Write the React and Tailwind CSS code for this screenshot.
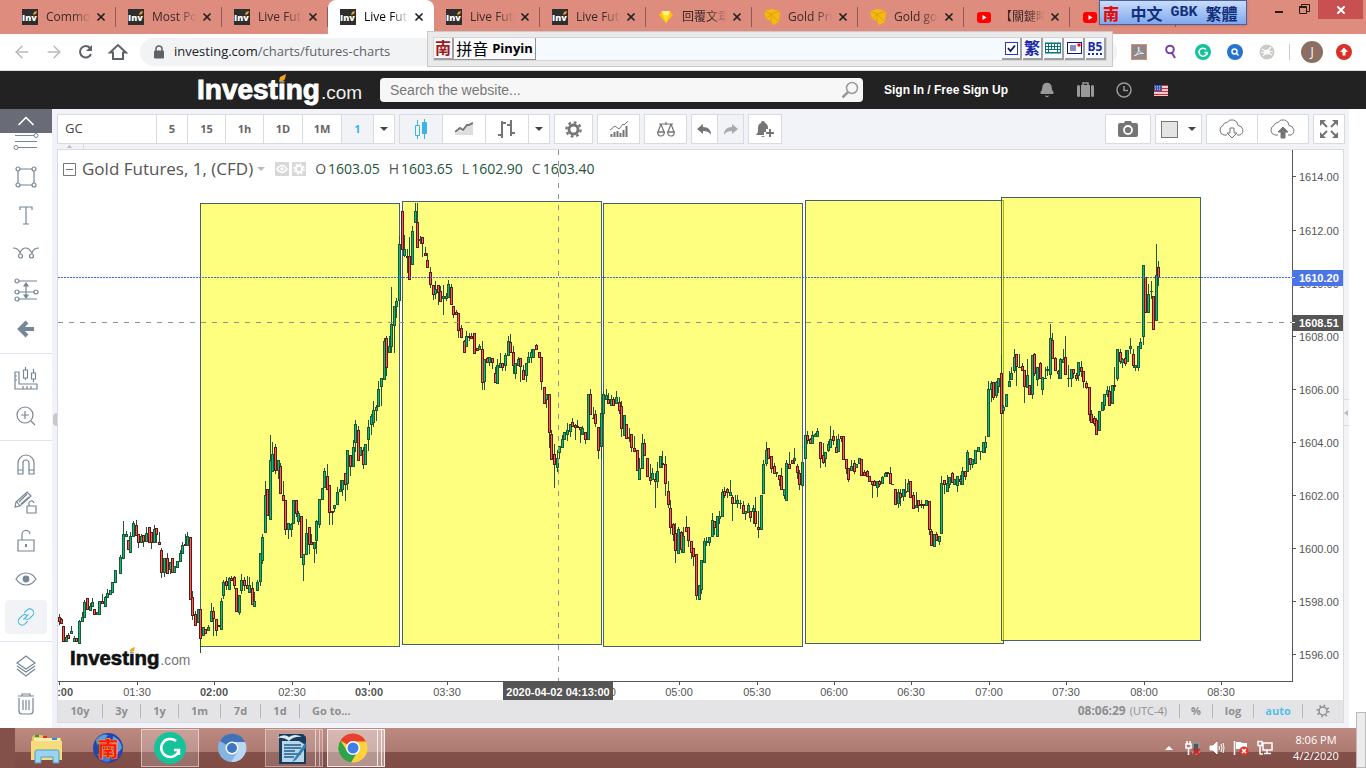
import { Fragment } from 'react';
import { ArrowLeft, ArrowRight, ChevronUp, X, Bell } from 'lucide-react';

const UI = "font-['Open_Sans','Noto_Sans_CJK_TC',sans-serif]";

// colour + x, then high, body top, body bottom, low
const CANDLES = `
r59 614 617 621 624,r61 618 619 623 623,r63 626 626 641 641,g66 635 637 641 641,r68 633 635 638 638,g71 626 631 633 633,g74 636 638 641 641,r76 638 638 641 641,
g79 620 621 643 643,g82 612 617 621 621,g84 600 602 617 617,r87 598 598 609 609,g90 603 606 610 610,g92 598 602 606 606,r94 609 609 614 614,g97 612 612 614 614,
g99 601 601 614 614,r102 594 601 603 603,g105 596 597 606 606,g107 589 593 597 597,g110 590 590 594 594,g112 582 582 592 592,g115 570 570 582 582,g120 555 557 573 573,
g123 521 534 558 558,g126 531 534 536 536,r128 540 540 549 549,g130 532 536 552 552,g133 521 523 536 536,r136 520 525 535 535,r138 534 534 542 547,g141 534 536 542 542,
r143 535 535 541 546,g146 527 533 541 541,r149 527 527 542 542,r151 532 532 542 548,g154 525 529 542 542,r156 528 528 534 542,r159 532 542 544 544,r161 548 550 572 577,
g164 558 558 572 576,r167 553 558 573 573,g170 562 562 569 573,r172 558 558 572 572,g174 566 566 572 572,g177 561 561 567 567,g180 550 553 561 561,g182 542 545 553 553,
r185 534 544 545 545,g187 532 536 545 545,r190 537 537 599 599,r192 591 597 615 619,r195 611 614 625 625,g198 609 609 622 622,r200 609 609 638 652,g203 627 627 635 635,
r205 629 629 633 633,g208 625 627 630 630,g211 603 611 621 621,r213 607 611 618 635,r216 619 619 630 635,r218 625 625 626 626,g221 598 601 629 629,g223 580 582 595 598,
r226 577 581 585 589,g229 577 578 589 589,r231 576 578 580 580,r234 576 577 585 588,r236 588 588 611 611,g239 595 595 612 614,g241 574 580 590 593,r244 577 580 585 590,
r247 576 585 588 588,g249 577 585 592 592,r252 582 588 604 604,g254 592 601 606 606,g257 580 582 590 590,g260 553 553 581 585,g262 534 537 560 563,g265 481 495 532 532,
r267 489 489 515 515,g270 435 460 519 519,g272 442 454 471 471,r275 444 447 470 473,g278 460 460 470 478,r280 463 466 493 493,r283 481 495 500 500,r285 500 500 529 534,
g288 523 523 529 538,g291 523 524 529 536,g293 500 500 523 523,r296 500 500 513 516,g298 511 513 521 524,r301 516 516 557 557,g303 554 554 564 580,g306 519 533 554 554,
r309 527 527 544 553,r311 534 542 544 544,g314 542 542 548 562,g316 520 521 540 553,g319 499 499 524 527,g322 488 488 499 499,g324 468 471 487 487,r327 464 476 489 489,
r329 485 485 512 524,r332 511 511 512 524,g334 505 505 508 511,g337 487 492 504 504,g340 480 489 491 491,g342 480 480 489 495,r345 473 473 484 500,g347 450 450 483 489,
r350 455 455 466 475,g353 440 447 466 466,g355 420 424 442 451,r358 426 430 460 460,g360 447 447 455 455,r363 447 450 464 468,g365 444 444 464 464,g368 420 427 439 450,
g371 414 416 424 434,g373 401 410 422 426,g376 405 407 410 420,g378 381 389 406 406,g381 378 378 386 405,g384 338 341 379 379,r386 336 338 367 375,g389 336 346 352 352,
g391 287 324 346 352,g394 306 306 325 352,g396 298 301 306 317,g399 236 244 300 306,r402 211 211 249 249,g404 235 249 255 256,r407 249 256 257 272,r409 237 256 279 279,
g412 226 231 264 264,g415 203 211 222 222,r417 203 222 247 247,g420 236 239 240 243,r422 237 237 243 256,r425 247 253 255 255,r427 253 260 267 267,r430 267 272 284 287,
r433 285 285 294 299,g435 281 289 293 298,r438 285 285 292 304,r440 286 291 301 301,g443 285 296 298 314,g446 293 296 298 300,g448 280 284 297 297,r451 284 287 304 304,
r453 306 306 314 317,r456 310 312 314 314,r458 313 313 330 337,r461 325 328 337 337,r464 340 341 352 352,g466 331 336 346 346,r469 333 336 337 340,r471 333 336 338 338,
r474 333 333 353 353,r477 348 348 350 350,g479 344 346 349 349,r482 341 349 382 389,g484 359 359 381 389,r487 357 358 362 362,g489 357 357 362 365,r492 358 358 362 368,
r495 367 373 382 382,g497 359 365 383 383,g500 353 363 367 367,r502 363 363 367 370,g505 353 355 365 370,g508 336 341 355 355,r510 334 342 352 352,r513 346 352 365 373,
g515 363 363 373 378,g518 357 359 365 365,r520 358 358 366 381,r523 365 370 379 379,g526 363 363 375 381,g528 352 357 362 362,g531 349 352 357 362,g533 349 349 357 357,
r536 344 345 349 349,r539 352 352 357 357,r541 357 357 381 389,r544 387 387 403 403,g546 394 394 399 407,r549 394 394 432 447,r551 430 434 459 459,r554 444 454 464 487,
g557 450 458 467 471,g559 446 446 452 458,g562 435 439 447 447,g564 432 432 439 439,g567 423 430 434 440,g570 424 424 431 436,r572 418 422 426 426,r575 424 425 427 439,
r577 420 426 427 427,r580 427 427 429 442,g582 426 428 434 434,r585 432 432 439 443,g588 394 394 439 439,r590 389 394 414 414,r593 407 418 418 418,r595 410 414 423 426,
r598 427 427 450 458,g601 413 413 446 458,g603 391 394 413 418,g606 389 395 399 399,r608 393 399 403 403,g611 395 399 405 405,r613 397 399 405 405,g616 391 397 403 403,
r619 397 402 410 413,r621 401 406 428 436,g624 415 415 435 435,r626 424 424 438 438,g629 428 437 438 441,r631 434 434 447 451,r634 436 448 451 451,r637 450 450 470 470,
g639 458 468 479 479,g642 434 443 468 468,r644 439 443 455 455,r647 458 458 476 476,r650 464 477 480 484,g652 468 473 479 479,r655 473 479 481 507,g657 462 471 481 487,
g660 456 456 467 467,r662 451 463 464 467,r665 456 464 483 495,r668 481 491 504 507,r670 500 508 527 533,r673 523 524 534 540,r675 523 533 550 562,g678 527 529 553 553,
r681 531 532 549 552,g683 527 536 552 552,r686 516 527 531 531,r688 527 527 540 546,r691 541 541 552 558,r693 548 548 556 565,r696 554 554 595 599,g699 585 585 599 599,
g701 560 560 589 593,g704 538 541 562 562,g706 537 541 542 545,g709 537 537 542 545,g712 513 520 536 536,r714 521 521 527 534,g717 516 516 536 536,g719 511 516 518 523,
g722 489 492 516 516,r724 487 491 495 497,r727 488 489 492 497,g730 480 492 495 495,r732 495 497 503 520,g735 495 503 503 503,g737 495 500 503 507,g740 500 503 503 508,
r743 501 505 513 513,g745 511 511 513 519,g748 503 505 512 512,r750 511 511 517 521,g753 505 508 511 523,r755 497 511 523 526,r758 511 527 529 537,g761 495 495 529 529,
g763 460 464 493 493,g766 442 450 463 465,r768 448 448 458 458,r771 456 456 468 472,r774 463 466 473 473,g776 472 472 473 476,r779 475 475 479 485,r781 468 476 489 489,
g784 489 489 495 498,g786 460 463 500 500,r789 452 464 468 468,r792 460 460 463 463,g794 448 458 460 463,r797 464 466 472 478,r799 470 473 484 489,g802 462 462 485 485,
g805 435 435 458 458,r807 431 435 440 443,r810 438 439 443 443,g812 431 435 443 443,g815 433 434 436 436,g817 428 431 436 436,r820 442 442 458 467,r823 443 455 462 463,
g825 452 452 458 466,g828 441 444 450 451,g830 426 439 447 447,r833 430 436 440 444,r836 436 447 452 452,g838 434 439 451 451,r841 436 436 438 441,r843 436 436 459 459,
r846 459 459 468 473,r848 468 468 479 481,g851 460 466 470 470,r854 460 463 471 473,g856 464 464 467 467,g859 458 458 463 463,r861 459 459 475 475,r864 470 472 475 475,
r867 470 471 476 476,r869 476 476 481 481,r872 481 481 484 497,r874 480 481 485 485,g877 481 481 487 496,r879 480 481 484 486,g882 476 477 483 483,g885 472 473 476 476,
r887 472 472 473 476,r890 467 473 483 483,g892 484 484 484 484,r895 489 489 504 504,g898 489 492 503 507,r900 489 493 497 505,g903 489 489 496 500,g905 479 491 492 496,
g908 479 483 491 491,r910 481 481 497 497,r913 492 495 508 508,g916 492 505 507 507,r918 500 500 505 511,r921 500 504 505 507,r923 504 504 505 508,g926 500 500 505 505,
r929 501 501 529 534,r931 529 531 545 545,g934 534 534 546 546,r936 532 534 540 540,g939 536 536 541 544,g941 476 483 533 533,r944 480 480 484 493,g947 475 483 491 491,
g949 477 477 484 487,r952 472 473 482 482,g954 479 479 484 484,g957 476 476 485 491,r960 475 479 481 484,g962 467 471 484 484,r965 471 471 476 479,g967 450 452 471 471,
r970 458 458 464 469,g972 459 459 464 467,g975 450 450 463 463,g978 447 447 451 451,g980 451 451 451 459,g983 442 442 452 452,g985 436 442 447 452,g988 381 389 436 436,
g991 381 383 389 401,r993 382 382 397 399,g996 381 382 395 397,g998 378 378 386 392,r1001 355 373 413 413,g1003 405 407 410 413,g1006 394 394 406 406,g1009 371 381 386 386,
g1011 367 373 379 379,g1014 349 357 370 372,r1016 354 354 366 385,g1019 354 367 367 367,r1022 363 366 370 370,r1024 370 370 386 402,g1027 359 375 387 387,r1029 385 385 394 394,
g1032 355 355 394 398,r1034 353 354 373 375,g1037 367 367 379 385,r1040 362 363 378 378,g1042 377 377 389 394,g1045 367 378 378 378,g1047 366 369 370 375,g1050 324 338 374 378,
r1052 333 340 358 358,r1055 357 358 370 370,r1058 370 371 373 378,g1060 358 359 378 378,g1063 349 359 362 362,r1065 336 357 374 374,g1068 365 378 378 386,g1071 369 369 378 386,
r1073 369 369 373 377,r1076 373 375 378 380,g1078 362 362 375 380,r1081 361 367 371 376,r1083 371 371 381 387,r1086 381 383 387 388,r1089 387 387 414 420,r1091 410 414 422 422,
r1094 416 418 423 425,r1096 418 420 434 434,g1099 411 411 430 430,g1102 402 402 410 410,g1104 394 394 405 409,g1107 386 390 394 396,r1109 386 391 405 405,g1112 385 385 403 403,
r1114 367 385 386 390,g1117 349 349 378 380,r1120 349 352 361 363,g1122 358 359 362 367,r1125 350 358 363 365,g1127 350 350 361 361,g1130 338 346 348 353,r1133 349 354 365 367,
g1135 365 365 367 370,g1138 346 346 367 370,g1140 338 342 348 348,g1143 265 265 336 344,r1145 277 277 312 312,g1148 284 294 312 312,g1151 281 291 291 298,r1153 296 296 329 329,
g1156 244 275 320 320,r1158 261 267 277 285`
  .split(',')
  .map((row) => {
    const s = row.trim();
    const [x, high, top, bottom, low] = s.slice(1).split(' ').map(Number);
    return { up: s[0] === 'g', x, high, top, bottom, low };
  });

const RANGES = [
  [200, 203, 200, 443],
  [402, 201, 200, 443],
  [603, 203, 200, 443],
  [805, 200, 199, 443],
  [1001, 197, 200, 443],
];

const PRICES = [
  ['1614.00', 176], ['1612.00', 230], ['1610.00', 283], ['1608.00', 336], ['1606.00', 389],
  ['1604.00', 442], ['1602.00', 495], ['1600.00', 548], ['1598.00', 601], ['1596.00', 654],
];

const TIMES = [
  ['01:00', 59, true], ['01:30', 137], ['02:00', 214, true], ['02:30', 292], ['03:00', 369, true], ['03:30', 447],
  ['04:30', 602], ['05:00', 679], ['05:30', 757], ['06:00', 834], ['06:30', 911], ['07:00', 989],
  ['07:30', 1066], ['08:00', 1144], ['08:30', 1221],
];

const TABS = [
  ['inv', 'Commodity'], ['inv', 'Most Popular'], ['inv', 'Live Futures'], ['inv', 'Live Futures', true],
  ['inv', 'Live Futures'], ['inv', 'Live Futures'], ['gem', '回覆文章'], ['box', 'Gold Price'],
  ['box', 'Gold goes'], ['yt', '【關鍵時刻'], ['yt', ''],
];

const Favicon = ({ kind }) => {
  if (kind === 'inv') {
    return (
      <svg viewBox="0 0 16 16" className="size-4 shrink-0">
        <rect width="16" height="16" fill="#2e2e2e" />
        <text x="0" y="12" fontSize="9" fontWeight="800" fill="#fff" fontFamily="Open Sans">Inv</text>
        <path d="M11 6l1-3 3-1-1 3z" fill="#f7a11b" />
      </svg>
    );
  }
  if (kind === 'gem') {
    return (
      <svg viewBox="0 0 16 16" className="size-4 shrink-0">
        <path d="M4 2h8l3 4-7 8-7-8z" fill="#fdc30b" />
        <path d="M4 2h8l-1 4H5z" fill="#fff27a" />
        <path d="M5 6h6l-3 8z" fill="#ffe12e" />
      </svg>
    );
  }
  if (kind === 'box') {
    return (
      <svg viewBox="0 0 16 16" className="size-4 shrink-0">
        <path d="M0 2l8-2 8 2-1 11-6 3-2-4-5-2z" fill="#f5b80f" />
        <path d="M0 2l7 3 9-3M7 5v7M2 10l5-5 8 8" stroke="#d99a10" strokeWidth=".8" fill="none" />
      </svg>
    );
  }
  return (
    <svg viewBox="0 0 16 16" className="size-4 shrink-0">
      <rect x="1" y="3" width="14" height="11" rx="3" fill="#f00" />
      <path d="M6.500 6v5l4-2.500z" fill="#fff" />
    </svg>
  );
};

const Tab = ({ kind, title, active }) => (
  <div
    className={`flex h-[34px] w-[106px] shrink-0 items-center pl-3 ${
      active ? 'rounded-t-lg bg-white' : 'text-[#3c2a28]'
    }`}
  >
    <Favicon kind={kind} />
    <span className="ml-2 w-[45px] overflow-hidden whitespace-nowrap text-xs [mask-image:linear-gradient(90deg,#000_60%,transparent)]">
      {title}
    </span>
    <button type="button" aria-label="Close tab" className="ml-1 text-[#222]">
      <X className="size-3" strokeWidth={3.500} />
    </button>
    {!active && <span className="ml-auto h-5 w-px bg-[#8e5c54]" />}
  </div>
);

const BrowserChrome = () => (
  <>
    <div className={`flex h-[34px] items-start overflow-hidden bg-[#de8c7d] pl-[10px] ${UI}`}>
      {TABS.map(([kind, title, active], i) => (
        <Tab key={i} kind={kind} title={title} active={active} />
      ))}
    </div>
    <div className={`flex h-[37px] items-center border-b border-[#dadce0] bg-white ${UI}`}>
      <div className="flex items-center gap-3 pl-3 text-[#5f6368]">
        <button type="button" aria-label="Back" className="text-[#b8babd]"><ArrowLeft className="size-5" strokeWidth={1.800} /></button>
        <button type="button" aria-label="Forward" className="text-[#b8babd]"><ArrowRight className="size-5" strokeWidth={1.800} /></button>
        <button type="button" aria-label="Reload">
          <svg viewBox="0 0 20 20" className="size-5" fill="none" stroke="currentColor" strokeWidth="2">
            <path d="M14 6A5.700 5.700 0 1 0 15 12" />
            <path d="M16 3v6h-6z" fill="currentColor" stroke="none" />
          </svg>
        </button>
        <button type="button" aria-label="Home">
          <svg viewBox="0 0 20 20" className="size-5" fill="none" stroke="currentColor" strokeWidth="2">
            <path d="M2 10.500L10 3l8 7.500h-3V17H5v-6.500z" />
          </svg>
        </button>
      </div>
      <div className="ml-3 flex h-7 flex-1 items-center rounded-full bg-[#f1f3f4] pl-3">
        <svg viewBox="0 0 12 14" className="size-3.5 text-[#5f6368]">
          <path d="M3 6V4a3 3 0 0 1 6 0v2" fill="none" stroke="currentColor" strokeWidth="1.500" />
          <rect x="1" y="5.500" width="10" height="8" rx="1" fill="currentColor" />
        </svg>
        <a href="#charts" className="ml-2 text-[13px] text-[#5f6368]">
          <span className="text-[#202124]">investing.com</span>/charts/futures-charts
        </a>
      </div>
      <div className="flex items-center gap-4 pl-[14px] pr-[14px]">
        <svg viewBox="0 0 16 16" className="size-4">
          <rect x=".5" y=".5" width="15" height="15" fill="#8a8a8a" stroke="#e08a78" />
          <path d="M3 12c3-1 5-5 5-8 0-2-1-1-.5 1 .8 3 2.500 4 5 4.500-3-.5-6 .5-8 2" fill="none" stroke="#eee" />
        </svg>
        <svg viewBox="0 0 16 16" className="size-4" fill="none" stroke="#7b3fa5" strokeWidth="2">
          <circle cx="7" cy="5.500" r="3.800" />
          <path d="M9 9l3 5" />
        </svg>
        <svg viewBox="0 0 16 16" className="size-4" fill="none" stroke="#fff" strokeWidth="1.500">
          <circle cx="8" cy="8" r="8" fill="#15c39a" stroke="none" />
          <path d="M11 5.500A4 4 0 1 0 12 8.500H9.500M12 8.500v2.500" />
        </svg>
        <svg viewBox="0 0 16 16" className="size-4" fill="none" stroke="#fff" strokeWidth="1.500">
          <circle cx="8" cy="8" r="8" fill="#2373cf" stroke="none" />
          <circle cx="7.500" cy="7.500" r="2.500" />
          <path d="M9.500 9.500l2 2" />
        </svg>
        <svg viewBox="0 0 16 16" className="size-4" fill="none" stroke="#fff" strokeWidth="1.200">
          <circle cx="8" cy="8" r="7.500" fill="#c9c9c6" stroke="none" />
          <path d="M3 5l10 6M4 12l8-9M2 8l5 1M10 7l4 1" />
          <circle cx="8" cy="8" r="2" />
        </svg>
      </div>
      <span className="h-4 w-px bg-[#c8cacd]" />
      <div className="flex items-center gap-[13px] pl-[11px] pr-[14px]">
        <button type="button" className="flex size-[22px] items-center justify-center rounded-full bg-[#8d6e63] text-xs text-white">J</button>
        <svg viewBox="0 0 16 16" className="size-4">
          <circle cx="8" cy="8" r="8" fill="#d93025" />
          <path d="M8 3.500l4 4.500H9.500v3.500h-3V8H4z" fill="#fff" />
        </svg>
      </div>
    </div>
  </>
);

// the input method windows float over the browser
const FloatingWindows = () => (
  <>
    <div className="absolute right-0 top-0 flex h-5 items-start text-[#2b1a18]">
      <button type="button" aria-label="Minimize" className="mt-[11px] h-[2px] w-2 bg-current" />
      <button type="button" aria-label="Restore" className="ml-4 mt-1">
        <svg viewBox="0 0 11 11" className="size-[11px]" fill="none" stroke="currentColor">
          <path d="M.5 2.500h7v7h-7zM.5 3.500h7M2.500 2V.5h8v7H8" />
        </svg>
      </button>
      <button type="button" aria-label="Close" className="ml-2 mr-[3px] flex h-[19px] w-[45px] items-center justify-center bg-[#c85050] text-white">
        <X className="size-3" strokeWidth={4} />
      </button>
    </div>
    <div className="absolute right-[253px] top-[31px] flex h-9 w-[686px] items-center border border-[#c9c9c9] bg-[#eaeaea] px-[5px]">
      <div className={`flex h-6 flex-1 items-center border border-[#d5d5d5] bg-[#f5faff] ${UI}`}>
        <span className="flex h-[22px] w-5 items-center justify-center border-r-2 border-b-2 border-[#a0a0a0] bg-[#f5f7fb] text-base font-bold leading-none text-[#a01c1c]">南</span>
        <span className="flex h-[22px] w-[82px] items-center justify-center gap-1 border-r border-b border-[#909090] bg-[#f8fafd] leading-none text-black">
          <span className="text-base leading-none">拼音</span>
          <span className="text-[13px] font-bold">Pinyin</span>
        </span>
        <div className="ml-auto flex gap-px text-[#1d2aa8]">
          <label className="flex h-[22px] w-5 items-center justify-center border-r-2 border-b-2 border-[#a0a0a0]">
            <input type="checkbox" defaultChecked aria-label="Enable input" className="peer sr-only" />
            <svg viewBox="0 0 13 13" className="size-[13px]" fill="#fff" stroke="#2a35c0">
              <rect x=".5" y=".5" width="12" height="12" />
              <path d="M3 6l2.500 3L10 3.500" fill="none" stroke="#111a55" strokeWidth="1.800" />
            </svg>
          </label>
          <span className="flex h-[22px] w-5 items-center justify-center border-r-2 border-b-2 border-[#a0a0a0] text-base font-bold leading-none">繁</span>
          <span className="flex h-[22px] w-5 items-center justify-center border-r-2 border-b-2 border-[#a0a0a0]">
            <svg viewBox="0 0 16 12" className="w-4">
              <rect width="16" height="11" y=".5" fill="#0b7278" />
              <path d="M1 3h14M1 6h14M1 9h2M13 9h2" stroke="#fff" strokeWidth="2" strokeDasharray="2 1" />
              <path d="M4 9h8" stroke="#fff" strokeWidth="2" />
            </svg>
          </span>
          <span className="flex h-[22px] w-5 items-center justify-center border-r-2 border-b-2 border-[#a0a0a0]">
            <svg viewBox="0 0 15 12" className="w-[15px]" fill="#fff" stroke="#16168c">
              <rect x=".5" y=".5" width="14" height="11" />
              <path d="M3 4h6M3 6h6M3 8h6" />
              <rect x="11" y="2" width="2" height="2" fill="red" stroke="red" />
            </svg>
          </span>
          <span className="flex h-[22px] w-5 flex-col items-center justify-center border-r-2 border-b-2 border-[#a0a0a0] text-xs font-bold leading-3">
            B5
            <span className="w-3.5 border-b-2 border-dotted border-current" />
          </span>
        </div>
      </div>
    </div>
    <div className="absolute right-[119px] top-0 flex h-[25px] w-[148px] items-center border border-[#4a5f9c] bg-linear-to-b from-[#c9dcfa] to-[#7fa8ee] font-['Noto_Sans_CJK_TC',sans-serif] shadow">
      <span className="w-[22px] text-center text-base font-black leading-none text-[#e01010]">南</span>
      <span className="flex flex-1 items-center justify-center gap-2 whitespace-nowrap text-base font-bold leading-none text-[#12307c]">
        <span>中文</span>
        <span className="font-['Liberation_Mono',monospace] text-[15px]">GBK</span>
        <span>繁體</span>
      </span>
    </div>
  </>
);

const Logo = ({ dark, className }) => (
  <svg viewBox="0 0 166 34" className={className} fontFamily="Liberation Sans, Arial, sans-serif">
    <text x="0" y="26" fontSize="28" fontWeight="700" fill={dark ? '#111' : '#fff'} stroke={dark ? '#111' : '#fff'} strokeWidth=".9">Investing</text>
    <text x="124" y="26" fontSize="19" fill={dark ? '#777' : '#f0f0f0'}>.com</text>
    <path d="M81 3h8v5.500h-8z" fill={dark ? '#fff' : '#222'} />
    <path d="M82 8l1-4 6-3-1 5-2 2z" fill="#f7a11b" />
  </svg>
);

const SiteHeader = () => (
  <header className="flex h-[38px] items-center bg-[#222] pl-[197px] font-['Liberation_Sans',Arial,sans-serif]">
    <Logo className="h-[34px] w-[166px]" />
    <div className="ml-[17px] flex h-6 w-[483px] items-center rounded-sm bg-[#f7f7f7] pr-1">
      <input
        type="text"
        aria-label="Search the website"
        placeholder="Search the website..."
        className="min-w-0 flex-1 pl-[10px] text-sm text-[#555] outline-none placeholder:text-[#777]"
      />
      <svg viewBox="0 0 18 18" className="size-[18px]" fill="none" stroke="#999" strokeWidth="1.500">
        <circle cx="11" cy="7" r="5.500" />
        <path d="M7 11l-5.500 5.500" strokeWidth="2.500" />
      </svg>
    </div>
    <a href="#login" className="ml-[21px] text-xs font-bold text-white">Sign In / Free Sign Up</a>
    <div className="ml-[31px] flex items-center gap-[22px] text-[#999]">
      <Bell className="size-4" fill="currentColor" />
      <svg viewBox="0 0 17 16" className="w-[17px]" fill="currentColor">
        <path d="M6 3V1h5v2" fill="none" stroke="currentColor" strokeWidth="1.500" />
        <rect x="4" y="3" width="9" height="12" />
        <rect y="3" width="3" height="12" rx="1.500" />
        <rect x="14" y="3" width="3" height="12" rx="1.500" />
      </svg>
      <svg viewBox="0 0 16 16" className="size-4" fill="none" stroke="currentColor" strokeWidth="1.500">
        <circle cx="8" cy="8" r="7" />
        <path d="M8 4v4.500h4" />
      </svg>
      <svg viewBox="0 0 14 11" className="w-3.5">
        <rect width="14" height="11" fill="#fff" />
        <path d="M0 .5h14M0 3.500h14M0 6.500h14M0 9.500h14" stroke="#d0303a" strokeWidth="1.300" />
        <rect width="8" height="6" fill="#3a55a5" />
        <path d="M1 1.500h6M1 3h6M1 4.500h6" stroke="#cdd6f0" strokeWidth=".7" strokeDasharray="1 1" />
      </svg>
    </div>
  </header>
);

const TOOLS = [
  [
    ['Shapes', <><path d="M5 5h16v16H5z" /><g fill="#fff"><circle cx="5" cy="5" r="2" /><circle cx="21" cy="5" r="2" /><circle cx="5" cy="21" r="2" /><circle cx="21" cy="21" r="2" /></g></>],
    ['Text', <path d="M7 8V5h12v3M13 5v17M10 22h6" />],
    ['Patterns', <><path d="M0 8c4 0 6 2 7 5 1-3 3-5 6-5s4 2 6 5c1-3 3-5 7-5" /><g fill="#fff"><circle cx="7.500" cy="16" r="2" /><circle cx="18.500" cy="16" r="2" /></g></>],
    ['Projection', <><path d="M5 3h19M5 14h19M5 21h19M13 6v12" /><path d="M11 8l2-3 2 3zM11 17l2 3 2-3z" fill="#758696" /><g fill="#fff"><circle cx="4" cy="3" r="2" /><circle cx="4" cy="14" r="2" /><circle cx="23" cy="14" r="2" /><circle cx="4" cy="21" r="2" /></g></>],
    ['Arrow', <path d="M14 6l-7 7 7 7M8 13h13" strokeWidth="4" />],
  ],
  [
    ['Measure', <><path d="M2 7h4v12h18v5H2zM2 11h2M2 15h2M10 24v-3M14 24v-3M18 24v-3" /><path d="M10.500 5h4v8h-4zM12.500 2v3M12.500 13v2M18.500 8h4v6h-4zM20.500 4v4M20.500 14v3" /></>],
    ['Zoom in', <><circle cx="12" cy="12" r="8" /><path d="M18 18l4 4M12 8v8M8 12h8" /></>],
  ],
  [
    ['Magnet', <path d="M5 22v-11a8 8 0 0 1 16 0v11h-5v-11a3 3 0 0 0-6 0v11zM5 18h5M16 18h5" />],
    ['Drawing mode', <><path d="M2 17l1-5L14 2l4 4L7 16zM4 12l3 4M6 12l8-8M8 14l8-7" /><path d="M14 16h9v7h-9zM16 16v-2a2.500 2.500 0 0 1 5-1" /></>],
    ['Lock', <><path d="M5 12h16v11H5zM9 12V7a4 4 0 0 1 8-1" /><path d="M13 16v3" strokeWidth="2" /></>],
    ['Hide', <><path d="M3 13c5-8 15-8 20 0-5 8-15 8-20 0z" /><circle cx="13" cy="13" r="2.800" fill="#758696" /></>],
    ['Link', <path d="M11 8l3-3a4.500 4.500 0 0 1 7 6l-4 4a4.500 4.500 0 0 1-5 0M15 18l-3 3a4.500 4.500 0 0 1-7-6l4-4a4.500 4.500 0 0 1 5 0M10 16l6-6" />],
  ],
  [
    ['Layers', <path d="M4 10l9-7 9 7-9 6zM4 13l9 6 9-6M4 16l9 7 9-7" />],
    ['Remove', <path d="M5 5h16M9 5V3h8v2M6 7v13q0 3 3 3h8q3 0 3-3V7M10 9v10M13 9v10M16 9v10" />],
  ],
];

const Sidebar = () => (
  <aside className="w-[52px] shrink-0 bg-white text-[#758696]">
    <div className="relative h-[49px] overflow-hidden">
      <svg viewBox="0 0 26 49" className="mx-auto w-[26px]" fill="none" stroke="currentColor">
        <path d="M2 20.500h22M2 26.500h22M2 32.500h22M2 38.500h22" />
        <circle cx="23" cy="26.500" r="2" fill="#fff" />
        <circle cx="3" cy="38.500" r="2" fill="#fff" />
      </svg>
      <button type="button" aria-label="Scroll up" className="absolute inset-x-0 top-0 flex h-6 items-center justify-center bg-[#696b77] text-white">
        <ChevronUp className="size-7" strokeWidth={1.500} />
      </button>
    </div>
    {TOOLS.map((group, g) => (
      <div key={g} className={g ? 'mt-[5px] border-t border-[#e0e6f0] pt-[5px]' : ''}>
        {group.map(([name, icon]) => (
          <button key={name} type="button" aria-label={name} className="flex h-[38px] w-full items-center justify-center">
            <span className={`flex h-[34px] w-[42px] items-center justify-center ${name === 'Link' ? 'rounded-sm bg-[#f1f3f6] text-[#3bb3e4]' : ''}`}>
              <svg viewBox="0 0 26 26" className={name === 'Link' ? 'size-[22px]' : 'size-[26px]'} fill="none" stroke="currentColor" strokeWidth="1.200">{icon}</svg>
            </span>
          </button>
        ))}
      </div>
    ))}
  </aside>
);

const Caret = () => (
  <svg viewBox="0 0 8 4" className="w-2"><path d="M0 0h8L4 4z" fill="#444" /></svg>
);

const Group = ({ children }) => (
  <div className="flex h-[30px] divide-x divide-[#d8dbe0] border border-[#d8dbe0] bg-white text-[#757575]">{children}</div>
);

const Btn = ({ w, label, on, children }) => (
  <button type="button" aria-label={label} className={`flex items-center justify-center ${w} ${on ? 'bg-[#f1f3f6] text-[#3bb3e4]' : ''}`}>
    {children}
  </button>
);

const Gear = ({ className }) => (
  <svg viewBox="0 0 18 18" className={className} fill="none" stroke="currentColor">
    <circle cx="9" cy="9" r="4.800" strokeWidth="3" />
    <circle cx="9" cy="9" r="7.500" strokeWidth="2.500" strokeDasharray="2.900 2.990" />
  </svg>
);

const Cloud = ({ up }) => (
  <svg viewBox="0 0 28 20" className="w-7" fill="none" stroke="currentColor">
    <path d="M9 16H6a5 5 0 0 1-1-9.500 4 4 0 0 1 4-3 6 6 0 0 1 11 3 5 5 0 0 1 2 9.500h-3" />
    {up ? <path d="M14 8l5 5h-3v6h-4v-6H9z" fill="currentColor" /> : <path d="M12 9h4v5h3l-5 5-5-5h3z" />}
  </svg>
);

const INTERVALS = [
  ['5', 'w-[31px]'], ['15', 'w-[38px]'], ['1h', 'w-[38px]'], ['1D', 'w-[39px]'], ['1M', 'w-[39px]'], ['1', 'w-8'],
];

const ChartToolbar = () => (
  <div className="flex gap-1 pl-[5px] pr-1 pt-[5px]">
    <Group>
      <input type="text" aria-label="Symbol" defaultValue="GC" className="w-[99px] px-[7px] text-[13px] text-[#444] outline-none" />
      {INTERVALS.map(([t, w]) => (
        <Btn key={t} w={w} label={t} on={t === '1'}>
          <span className={`text-[11px] font-bold ${t === '1' ? '' : 'text-[#666]'}`}>{t}</span>
        </Btn>
      ))}
      <Btn w="w-5" label="More intervals"><Caret /></Btn>
    </Group>
    <Group>
      <Btn w="w-[43px]" label="Candles" on>
        <svg viewBox="0 0 14 20" className="h-5 w-3.5" fill="none" stroke="currentColor">
          <path d="M1.500 6.500h4v10h-4zM3.500 1v5M3.500 17v3M10.500 0v20" />
          <path d="M8.500 3.500h4v11h-4z" fill="currentColor" />
        </svg>
      </Btn>
      <Btn w="w-[43px]" label="Area">
        <svg viewBox="0 0 18 14" className="w-[18px]" fill="none" stroke="currentColor" strokeWidth="2">
          <path d="M0 12l5-4 3 2 4-6h2l4-3v12H0z" fill="#ddd" stroke="none" />
          <path d="M0 10l5-4 3 2 4-5h2l4-2" />
        </svg>
      </Btn>
      <Btn w="w-[43px]" label="Bars">
        <svg viewBox="0 0 18 18" className="size-[18px]" fill="none" stroke="currentColor" strokeWidth="2">
          <path d="M4 1v17M4 3h4M0 15h4M13 0v16M9 5h4M13 13h4" />
        </svg>
      </Btn>
      <Btn w="w-5" label="More styles"><Caret /></Btn>
    </Group>
    <Group><Btn w="w-[37px]" label="Settings"><Gear className="size-[17px]" /></Btn></Group>
    <Group>
      <Btn w="w-[41px]" label="Indicators">
        <svg viewBox="0 0 18 16" className="w-[18px]" fill="none" stroke="currentColor">
          <path d="M1.500 16v-3M4.500 16v-5M7.500 16v-6M10.500 16v-4M13.500 16V9M16.500 16V5" strokeWidth="2" />
          <path d="M0 9l5-4 4 3 4-5 1 1 4-4" />
        </svg>
      </Btn>
    </Group>
    <Group>
      <Btn w="w-[41px]" label="Compare">
        <svg viewBox="0 0 18 15" className="w-[18px]" fill="none" stroke="currentColor" strokeWidth="1.200">
          <path d="M2 2h14M9 0v3M4 2L1 10h6L4 2M14 2l-3 8h6l-3-8" />
          <path d="M.5 10h7q-.5 4-3.500 4T.5 10zM10.500 10h7q-.5 4-3.500 4t-3.500-4z" />
        </svg>
      </Btn>
    </Group>
    <Group>
      <Btn w="w-[26px]" label="Undo">
        <svg viewBox="0 0 15 11" className="w-[15px]" fill="currentColor"><path d="M6 0v3q8 0 8 8-2-4-8-4v3L0 5z" /></svg>
      </Btn>
      <Btn w="w-[25px]" label="Redo" on>
        <svg viewBox="0 0 15 11" className="w-[15px]" fill="#aaa"><path d="M9 0v3Q1 3 1 11q2-4 8-4v3l6-5z" /></svg>
      </Btn>
    </Group>
    <Group>
      <Btn w="w-8" label="Add alert">
        <svg viewBox="0 0 19 17" className="w-[19px]" fill="currentColor">
          <path d="M7 0q2 0 2 2 3 1 3 5v1h-2v3H8v3H0l2-3V7q0-4 3-5 0-2 2-2zM5 15h4q-2 2-4 0z" />
          <path d="M14 8v8M10 12h8" stroke="currentColor" strokeWidth="2" />
        </svg>
      </Btn>
    </Group>
    <div className="ml-auto flex gap-1">
      <Group>
        <Btn w="w-11" label="Snapshot">
          <svg viewBox="0 0 20 16" className="w-5" fill="currentColor">
            <path d="M6 2l1-2h6l1 2h4q2 0 2 2v10q0 2-2 2H2q-2 0-2-2V4q0-2 2-2z" />
            <circle cx="10" cy="9" r="4" fill="none" stroke="#fff" strokeWidth="1.800" />
          </svg>
        </Btn>
      </Group>
      <Group>
        <Btn w="w-[45px]" label="Layout">
          <span className="mr-[10px] size-[17px] border border-[#777] bg-[#e4e4e4]" />
          <Caret />
        </Btn>
      </Group>
      <Group>
        <Btn w="w-[51px]" label="Load"><Cloud /></Btn>
        <Btn w="w-[50px]" label="Save"><Cloud up /></Btn>
      </Group>
      <Group>
        <Btn w="w-[30px]" label="Fullscreen">
          <svg viewBox="0 0 18 18" className="size-[18px]" fill="currentColor" stroke="currentColor">
            <path d="M0 0h6L0 6zM18 0h-6l6 6zM0 18h6l-6-6zM18 18h-6l6-6z" stroke="none" />
            <path d="M1 1l6 6M17 1l-6 6M1 17l6-6M17 17l-6-6" strokeWidth="2" />
          </svg>
        </Btn>
      </Group>
    </div>
  </div>
);

const Legend = () => (
  <div className="absolute left-[5px] top-[7px] flex items-center text-[#555]">
    <svg viewBox="0 0 13 13" className="size-[13px]" fill="none" stroke="#777"><path d="M.5.5h12v12H.5zM3 6.500h7" /></svg>
    <span className="ml-[6px] text-[17px] leading-6">Gold Futures, 1, (CFD)</span>
    <svg viewBox="0 0 8 4" className="ml-1 w-2"><path d="M0 0h8L4 4z" fill="#bbb" /></svg>
    <span className="ml-[10px] flex size-[14px] items-center justify-center bg-[#d8d8d8]">
      <svg viewBox="0 0 12 12" className="w-3" fill="none" stroke="#fff" strokeWidth="1.500"><path d="M1 6q5-7 10 0-5 7-10 0z" /><circle cx="6" cy="6" r="1" /></svg>
    </span>
    <span className="ml-[3px] flex size-[14px] items-center justify-center bg-[#d8d8d8] text-white"><Gear className="size-3" /></span>
    {[['O', '1603.05'], ['H', '1603.65'], ['L', '1602.90'], ['C', '1603.40']].map(([k, v]) => (
      <span key={k} className="ml-[9px] text-sm">
        {k}<span className="ml-0.5 text-[#225437]">{v}</span>
      </span>
    ))}
  </div>
);

const Chart = () => (
  <svg viewBox="58 150 1285 550" className="block w-full" shapeRendering="crispEdges" fontSize="11" fontFamily="Liberation Sans, Arial, sans-serif" fill="#555">
    {RANGES.map(([x, y, w, h]) => (
      <rect key={x} x={x + 0.5} y={y + 0.5} width={w - 1} height={h} fill="#ff0" fillOpacity=".5" stroke="#46606e" />
    ))}
    {CANDLES.map(({ up, x, high, top, bottom, low }) => (
      <Fragment key={x}>
        <rect x={x} y={high} width="1" height={low - high + 1} fill="#225437" />
        <rect x={x - 1} y={top} width="3" height={bottom - top + 1} fill={up ? '#225437' : '#5b1a13'} />
        {bottom - top > 1 && <rect x={x} y={top + 1} width="1" height={bottom - top - 1} fill={up ? '#00c176' : '#ff5b52'} />}
      </Fragment>
    ))}
    <path d="M58 277.500h1234" stroke="#3f66d0" strokeDasharray="2 1" />
    <path d="M58 322.500h1234" stroke="#909090" strokeDasharray="5 6" />
    <path d="M558.500 150v531" stroke="#909090" strokeDasharray="5 6" />

    <path d="M1292.500 150v531.500H58" fill="none" stroke="#555" />
    {PRICES.map(([label, y]) => (
      <g key={label}>
        <path d={`M1293 ${y + 0.5}h3`} stroke="#555" />
        <text x="1299" y={y + 5}>{label}</text>
      </g>
    ))}
    {TIMES.map(([label, x, bold]) => (
      <g key={label}>
        <path d={`M${x + 0.5} 682v3`} stroke="#555" />
        <text x={x} y="696" textAnchor="middle" fontWeight={bold ? 700 : 400}>{label}</text>
      </g>
    ))}
    <g fill="#fff" fontWeight="700">
      <rect x="1292" y="270" width="51" height="16" fill="#4a74e8" />
      <text x="1299" y="282">1610.20</text>
      <rect x="1292" y="315" width="51" height="16" fill="#555" />
      <text x="1299" y="327">1608.51</text>
      <path d="M1292 277.500h3M1292 322.500h3" stroke="#fff" />
      <rect x="503" y="682" width="110" height="18" fill="#555" />
      <text x="558" y="696" textAnchor="middle">2020-04-02 04:13:00</text>
    </g>
  </svg>
);

const Divider = () => <span className="h-3.5 w-px bg-[#b8b8bb]" />;

const RANGE_LINKS = [['10y', 'w-[44px]'], ['3y', 'w-[37px]'], ['1y', 'w-[37px]'], ['1m', 'w-[41px]'], ['7d', 'w-[39px]'], ['1d', 'w-[38px]']];

const BottomBar = () => (
  <div className="flex h-[22px] items-center bg-[#e4e4e7] text-[11px] font-bold text-[#8e8e8e]">
    {RANGE_LINKS.map(([t, w]) => (
      <Fragment key={t}>
        <button type="button" className={w}>{t}</button>
        <Divider />
      </Fragment>
    ))}
    <button type="button" className="ml-3">Go to...</button>
    <span className="ml-auto text-xs">08:06:29</span>
    <span className="ml-1 mr-3 font-normal">(UTC-4)</span>
    <Divider />
    <button type="button" className="w-8">%</button>
    <Divider />
    <button type="button" className="w-10">log</button>
    <Divider />
    <button type="button" className="w-12 text-[#53bfe8]">auto</button>
    <Divider />
    <button type="button" aria-label="Chart properties" className="flex w-10 justify-center">
      <svg viewBox="0 0 14 14" className="size-3.5" fill="none" stroke="currentColor">
        <circle cx="7" cy="7" r="4" strokeWidth="1.500" />
        <circle cx="7" cy="7" r="5.500" strokeWidth="2" strokeDasharray="1.500 2.820" />
      </svg>
    </button>
  </div>
);

const Taskbar = () => (
  <footer className={`flex h-10 items-center bg-[linear-gradient(#bd8a82,#ad7a72_60%,#84504a_60%,#804c46)] text-white ${UI}`}>
    <div className="h-full w-[15px] bg-[#84504a]" />
    <button type="button" aria-label="File Explorer" className="ml-4">
      <svg viewBox="0 0 32 32" className="size-8">
        <path d="M1 5l2-2h8l2 3h17v22H1z" fill="#e7c85c" />
        <path d="M3 6h26v20H3z" fill="#f9eeb0" />
        <path d="M0 9h31v19H0z" fill="#f4dc7c" />
        <path d="M4 3h4v2H4z" fill="#1da53a" /><path d="M12 4h4v2h-4z" fill="#d8322a" /><path d="M21 6h5v2h-5z" fill="#2a8bd8" />
        <path d="M4 31V20q0-2 2-2h20q2 0 2 2v11h-6v-6H10v6z" fill="#9bd4f2" stroke="#4c9dcb" />
      </svg>
    </button>
    <button type="button" aria-label="NJStar" className="ml-7">
      <svg viewBox="0 0 34 32" className="h-8 w-[34px]">
        <circle cx="17" cy="16" r="15" fill="#2346a8" />
        <path d="M5 8q6-7 12-5l-4 6-7 4zM22 4q8 4 9 12l-5 6-5-8z" fill="#5c9bdc" />
        <path d="M6 22q8-2 14 6l-3 2Q9 30 6 22z" fill="#4679cc" />
        <text x="17" y="24" textAnchor="middle" fontSize="21" fontWeight="900" fill="#f11" stroke="#ff9a1c" strokeWidth=".6" fontFamily="Noto Sans CJK TC">南</text>
      </svg>
    </button>
    <button type="button" aria-label="Grammarly" className="ml-4 flex h-[38px] w-[58px] items-center justify-center border border-white/50 bg-white/20">
      <svg viewBox="0 0 32 32" className="size-8" fill="none" stroke="#fff" strokeWidth="2.500">
        <circle cx="16" cy="16" r="16" fill="#15c39a" stroke="none" />
        <path d="M22 9a9 9 0 1 0 3 9h-5M25 18v5" />
      </svg>
    </button>
    <button type="button" aria-label="Chromium" className="ml-[18px]">
      <svg viewBox="0 0 30 30" className="size-[30px]">
        <circle cx="15" cy="15" r="14" fill="#86b4e2" />
        <path d="M15 15L3 8a14 14 0 0 1 25 1H15z" fill="#3f73b5" />
        <path d="M15 15l6 3-7 11a14 14 0 0 0 14-20H18z" fill="#b9d6f2" />
        <circle cx="15" cy="15" r="6.500" fill="#fff" /><circle cx="15" cy="15" r="5" fill="#3c77c2" />
      </svg>
    </button>
    <button type="button" aria-label="LibreOffice Writer" className="ml-[18px] flex h-[38px] w-[58px] border border-white/40 bg-white/15">
      <span className="flex h-full w-[50px] items-center justify-center border-r border-white/60">
        <svg viewBox="0 0 32 34" className="h-[34px]">
          <path d="M4 3h24l3 3v27H4z" fill="#173c5c" />
          <path d="M7 10h17l5 3v18H7z" fill="#b8d6e8" />
          <path d="M9 14h17M9 17h17M9 20h11M9 23h17M9 26h10" stroke="#1f5f8f" strokeWidth="1.500" />
          <path d="M2 7q7-5 12-1 6-4 13 0-8-1-13 4Q9 6 2 7z" fill="#dcebf5" />
          <path d="M30 12L19 28l-2 3 4-2 11-14z" fill="#2f7fb5" />
        </svg>
      </span>
      <span className="h-full w-1 border-r border-white/50" />
    </button>
    <button type="button" aria-label="Chrome" className="ml-1 flex h-[38px] w-[58px] border border-white/80 bg-white/40">
      <span className="flex h-full w-[50px] items-center justify-center border-r border-white/80">
        <svg viewBox="0 0 30 30" className="size-[30px]">
          <circle cx="15" cy="15" r="14.500" fill="#fdd23a" />
          <path d="M15 15L2.500 7.500a14.500 14.500 0 0 1 25.500 1H15z" fill="#e8402f" />
          <path d="M15 15l-2 14.500A14.500 14.500 0 0 1 2.500 7.500L9 18z" fill="#2fa24c" />
          <path d="M13 29.500L20 18 9 18z" fill="#2fa24c" />
          <circle cx="15" cy="15" r="7" fill="#fff" /><circle cx="15" cy="15" r="5.500" fill="#3f7ee8" />
        </svg>
      </span>
      <span className="h-full w-1 border-r border-white/80" />
    </button>
    <div className="ml-auto flex items-center gap-2">
      <svg viewBox="0 0 8 4" className="mr-1 w-2"><path d="M0 4h8L4 0z" fill="#fff" /></svg>
      <svg viewBox="0 0 16 16" className="size-4" fill="none" stroke="#fff" strokeWidth="1.500">
        <path d="M1 4h5v4H1zM2 1v3M5 1v3M3.500 8v7" />
        <path d="M8 14V3h6v11z" fill="#555" stroke="#999" />
        <path d="M8 9l7 6M15 9l-7 6" stroke="#d22" strokeWidth="2" />
      </svg>
      <svg viewBox="0 0 16 16" className="size-4" fill="#fff" stroke="#fff">
        <path d="M1 6h3l4-4v12l-4-4H1z" /><path d="M10 6q1 2 0 4M12 4q2 4 0 8M14 3q2 5 0 10" fill="none" />
      </svg>
      <svg viewBox="0 0 16 16" className="size-4">
        <path d="M1.500 1v14" stroke="#fff" strokeWidth="1.500" /><path d="M3 2h5l1 1h5v7H9L8 9H3z" fill="#fff" />
        <circle cx="11" cy="11" r="4.500" fill="#e0352b" /><path d="M9 9l4 4M13 9l-4 4" stroke="#fff" strokeWidth="1.500" />
      </svg>
      <svg viewBox="0 0 16 16" className="size-4" fill="none" stroke="#fff" strokeWidth="1.500">
        <path d="M6 3h9v7H6zM10 10v3M7 13.500h7M1 1.500h4v4H1zM3 6v8h3" />
      </svg>
    </div>
    <div className="ml-[18px] w-[50px] whitespace-nowrap text-center text-[11px] leading-4">
      <div>8:06 PM</div>
      <div>4/2/2020</div>
    </div>
    <div className="ml-[15px] h-14 w-[10px] shrink-0 -translate-y-2 border border-[#bbb] bg-[#ececec]" />
  </footer>
);

const App = () => (
  <div className="relative flex min-h-screen flex-col overflow-hidden bg-white">
    <BrowserChrome />
    <SiteHeader />
    <main className={`flex flex-1 ${UI}`}>
      <Sidebar />
      <section className="relative mr-[17px] min-w-0 flex-1 bg-[#f1f3f8]">
        <ChartToolbar />
        <div className="flex h-[5px] items-center pl-[5px]">
          <svg viewBox="0 0 27 5" className="w-[27px]"><path d="M10 4h5l-2.500-3z" fill="#bbb" /><path d="M26.500 0v5" stroke="#d8dbe0" /></svg>
        </div>
        <div className="mx-[5px] border border-[#d8dbe0] bg-white">
          <div className="relative">
            <Chart />
            <Legend />
            <Logo dark className="absolute bottom-[29px] left-3 w-[121px]" />
          </div>
          <BottomBar />
        </div>
        <span className="absolute left-[1px] top-[304px] h-[13px] w-1 rounded-l-full bg-[#c8c8c8]" />
        <span className="absolute right-0 top-[290px] flex h-[27px] w-[5px] items-center border-y border-[#d8dbe0]">
          <svg viewBox="0 0 4 6" className="w-1"><path d="M4 0v6L0 3z" fill="#bbb" /></svg>
        </span>
      </section>
    </main>
    <Taskbar />
    <FloatingWindows />
  </div>
);

export default App;
